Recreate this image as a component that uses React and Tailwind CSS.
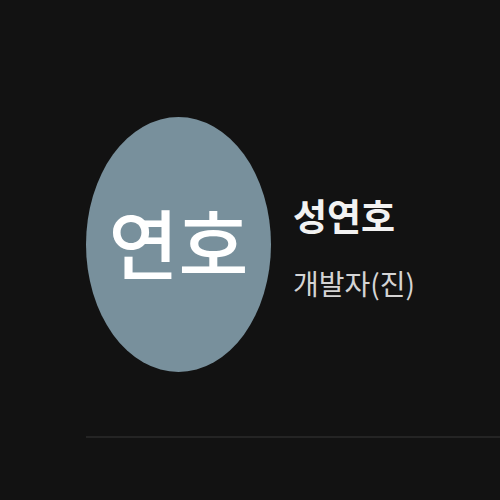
export default function App() {
  return (
    <main className="min-h-screen overflow-hidden bg-[#121212] pt-[117px] pl-[86px] font-['Noto_Sans_CJK_KR',sans-serif]">
      <section className="flex items-start gap-[22px] border-b-2 border-[#242424] pb-16">
        <div className="flex h-[255px] w-[185px] shrink-0 items-center justify-center rounded-[50%] bg-[#78909c] pb-2">
          <span className="text-[76px] leading-none font-medium text-white">연호</span>
        </div>
        <div className="pt-[72px] whitespace-nowrap">
          <h1 className="text-[37px] leading-[52px] font-bold text-[#f2f2f2]">성연호</h1>
          <p className="mt-4 text-[28px] leading-[52px] text-[#d4d4d4]">개발자(진)</p>
        </div>
      </section>
    </main>
  );
}
